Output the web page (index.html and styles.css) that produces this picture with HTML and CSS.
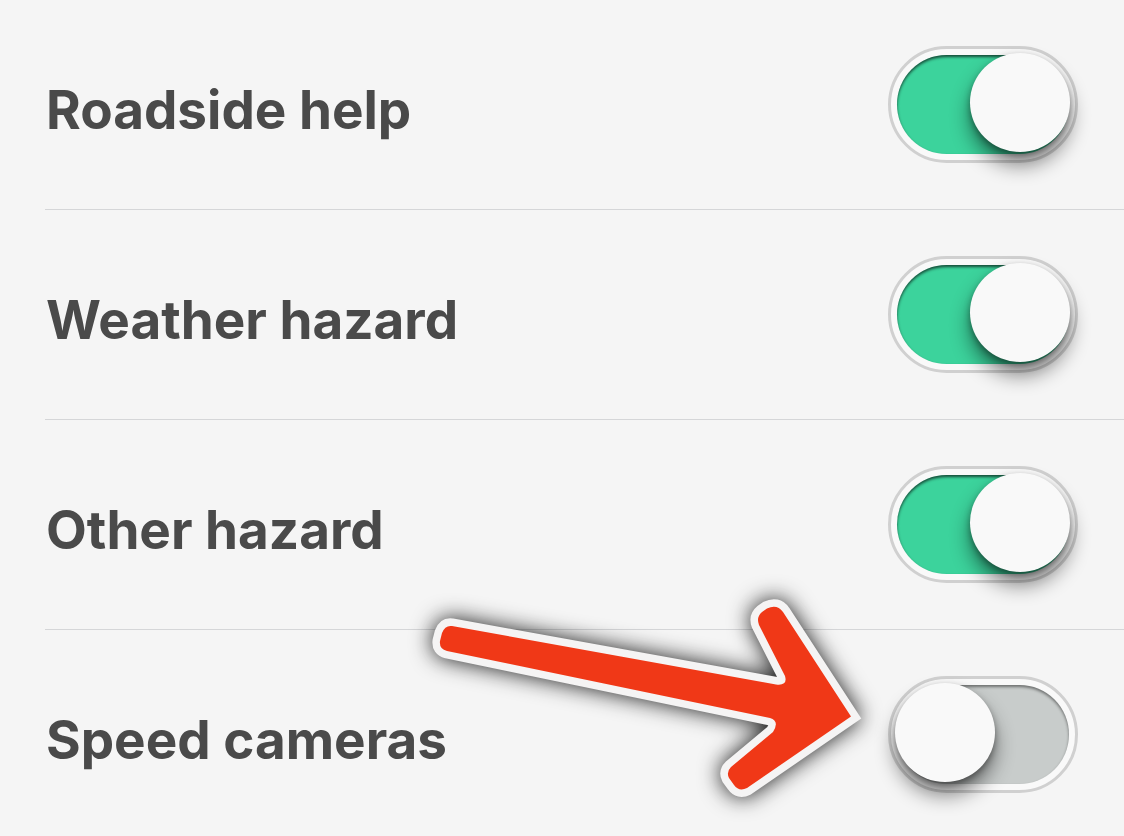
FILE: index.html
```html
<!DOCTYPE html>
<html lang="en">
<head>
<meta charset="utf-8">
<meta name="viewport" content="width=device-width, initial-scale=1">
<title>Alerts</title>
<link rel="stylesheet" href="styles.css">
</head>
<body>
<main class="settings">
  <div class="row">
    <label class="row-label" for="roadside">Roadside help</label>
    <input class="switch" type="checkbox" role="switch" id="roadside" checked>
  </div>
  <div class="row">
    <label class="row-label" for="weather">Weather hazard</label>
    <input class="switch" type="checkbox" role="switch" id="weather" checked>
  </div>
  <div class="row">
    <label class="row-label" for="other">Other hazard</label>
    <input class="switch" type="checkbox" role="switch" id="other" checked>
  </div>
  <div class="row">
    <label class="row-label" for="cameras">Speed cameras</label>
    <input class="switch" type="checkbox" role="switch" id="cameras">
  </div>
  <svg class="arrow" viewBox="400 570 500 260" width="500" height="260" aria-hidden="true">
    <path class="arrow-shape" d="M452 626 L776 684.500 Q788 686 785 676 L759 625 Q756 617 762 612 L767 608.500 Q777 603.500 783 612 L851 716.500 L747 788 Q739 792 734 785 L729 778 Q726 772 731 767 L773 732 Q780 721 770 718 L640 691 L447 651 Q439 649 440 641 L442 633 Q445 625 452 626 Z"/>
  </svg>
</main>
</body>
</html>
```
FILE: styles.css
```css
* {
  box-sizing: border-box;
}

body {
  margin: 0;
  background: #f5f5f5;
  color: #4a4a4a;
  font-family: Inter, "Liberation Sans", sans-serif;
}

.settings {
  position: relative;
  padding-left: 45px;
  overflow: hidden;
}

.row {
  display: flex;
  align-items: flex-start;
  justify-content: space-between;
  min-height: 210px;
  padding: 46px 46px 46px 1px;
  border-bottom: 1px solid #d5d6d8;
}

.row:last-of-type {
  border-bottom: 0;
}

.row-label {
  padding-top: 32px;
  font-size: 53px;
  font-weight: 700;
  line-height: 64px;
}

.switch {
  appearance: none;
  position: relative;
  flex: none;
  display: flex;
  width: 190px;
  height: 117px;
  margin: 0;
  padding: 6px;
  border: 3px solid #d0d0d0;
  border-radius: 59px;
  background: #f9f9f9;
}

.switch::before {
  content: "";
  flex: 1;
  border-radius: 50px;
  background: #c8cccb;
  box-shadow: inset 0 2px 3px rgba(0, 0, 0, 0.45);
}

.switch:checked::before {
  background: #3cd39c;
  box-shadow: inset 0 2px 3px rgba(0, 0, 0, 0.65);
}

.switch::after {
  content: "";
  position: absolute;
  top: 4px;
  left: 4px;
  width: 100px;
  height: 99px;
  border-radius: 50%;
  background: #f9f9f9;
  box-shadow: 0 3px 6px rgba(0, 0, 0, 0.35), 0 13px 20px rgba(0, 0, 0, 0.48);
}

.switch:checked::after {
  right: 5px;
  left: auto;
}

.arrow {
  position: absolute;
  top: 570px;
  left: 400px;
  pointer-events: none;
  filter: drop-shadow(0 0 11px rgba(0, 0, 0, 0.9));
}

.arrow-shape {
  fill: #f03817;
  stroke: #f5f4f4;
  stroke-width: 15px;
  stroke-linejoin: miter;
  paint-order: stroke;
}
```
